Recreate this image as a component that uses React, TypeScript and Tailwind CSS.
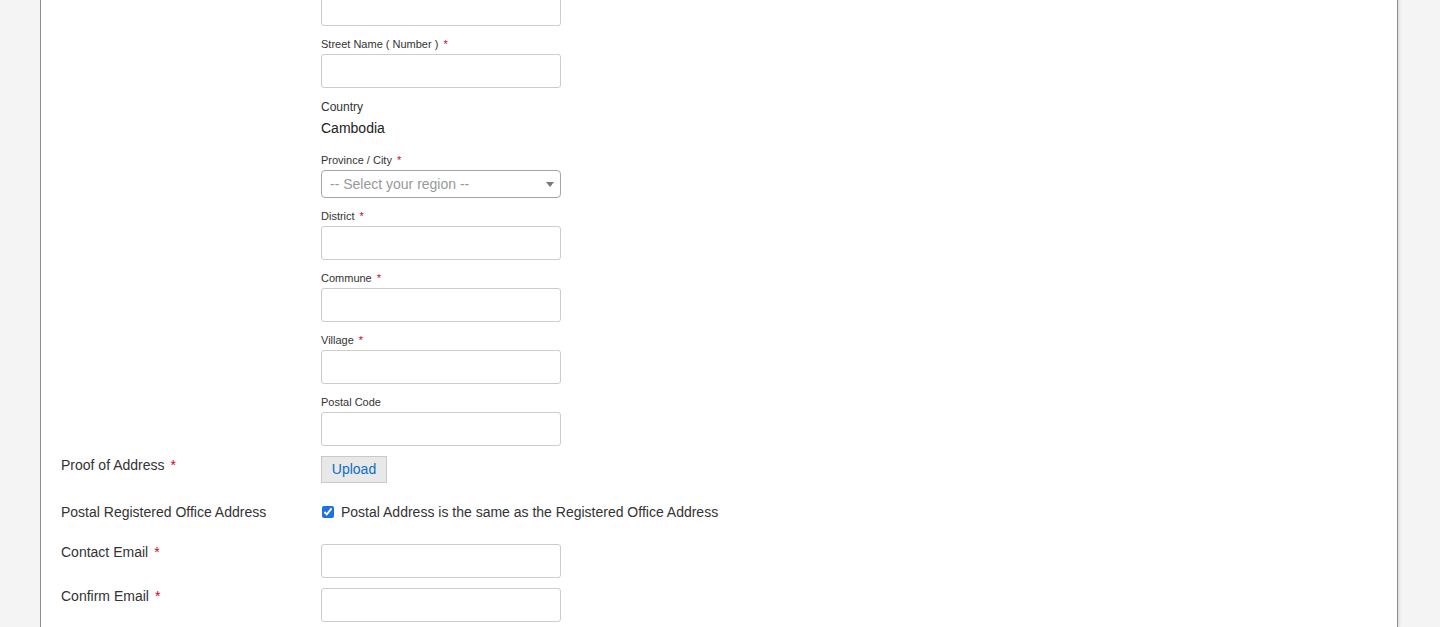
import React from "react";

const FONT = { fontFamily: '"Liberation Sans", Arial, sans-serif' };

function Req({ wide }: { wide?: boolean }) {
  return <span className={`${wide ? "ml-[6px]" : "ml-[5px]"} text-[#d0021b]`}>*</span>;
}

function SmallField({ label, required }: { label: string; required?: boolean }) {
  return (
    <div className="mt-[11px]">
      <div className="text-[11px] leading-[14px] text-[#333]">
        {label}
        {required && <Req />}
      </div>
      <input
        type="text"
        className="mt-[3px] block h-[34px] w-[240px] rounded-[3px] border border-[#cccccc] bg-white outline-none"
      />
    </div>
  );
}

function Row({
  label,
  required,
  className,
  labelClassName,
  children,
}: {
  label: string;
  required?: boolean;
  className?: string;
  labelClassName?: string;
  children: React.ReactNode;
}) {
  return (
    <div className={`flex ${className ?? ""}`}>
      <div className={`w-[260px] shrink-0 text-[14px] leading-[18px] text-[#333] ${labelClassName ?? ""}`}>
        {label}
        {required && <Req wide />}
      </div>
      <div>{children}</div>
    </div>
  );
}

export default function App() {
  return (
    <div className="h-[627px] overflow-hidden bg-[#f4f4f4]" style={FONT}>
      <div className="ml-[40px] flow-root h-[627px] w-[1358px] border-x border-[#8c8c8c] bg-white pl-[20px] shadow-[2px_0_2px_rgba(0,0,0,0.08)]">
        {/* address block */}
        <div className="ml-[260px]">
          <input
            type="text"
            className="-mt-[8px] block h-[34px] w-[240px] rounded-[3px] border border-[#cccccc] bg-white outline-none"
          />
          <SmallField label="Street Name ( Number )" required />

          <div className="mt-[11px] text-[12px] leading-[16px] text-[#333]">Country</div>
          <div className="mt-[3px] text-[14px] leading-[20px] text-[#222]">Cambodia</div>

          <div className="mt-[15px] text-[11px] leading-[14px] text-[#333]">
            Province / City
            <Req />
          </div>
          <div className="relative mt-[3px] flex h-[28px] w-[240px] items-center rounded-[4px] border border-[#a6a6a6] bg-white pl-[8px] text-[14px] text-[#999]">
            -- Select your region --
            <span className="absolute right-[6px] top-[11px] h-0 w-0 border-x-[4px] border-t-[5px] border-x-transparent border-t-[#7a7a7a]" />
          </div>

          <SmallField label="District" required />
          <SmallField label="Commune" required />
          <SmallField label="Village" required />
          <SmallField label="Postal Code" />
        </div>

        <Row label="Proof of Address" required className="mt-[10px]">
          <button className="h-[27px] w-[66px] border border-[#c9c9c9] bg-[#e8e8e8] text-[14px] text-[#0b6fc2]">
            Upload
          </button>
        </Row>

        <Row label="Postal Registered Office Address" className="mt-[19px] items-center">
          <label className="flex h-[20px] items-center text-[14px] text-[#333]">
            <input
              type="checkbox"
              defaultChecked
              className="ml-[1px] mr-[7px] h-[12px] w-[12px] accent-[#1f6fe5]"
            />
            Postal Address is the same as the Registered Office Address
          </label>
        </Row>

        <Row label="Contact Email" required className="mt-[22px]" labelClassName="-mt-px">
          <input
            type="text"
            className="block h-[34px] w-[240px] rounded-[3px] border border-[#cccccc] bg-white outline-none"
          />
        </Row>

        <Row label="Confirm Email" required className="mt-[10px]" labelClassName="-mt-px">
          <input
            type="text"
            className="block h-[34px] w-[240px] rounded-[3px] border border-[#cccccc] bg-white outline-none"
          />
        </Row>
      </div>
    </div>
  );
}
